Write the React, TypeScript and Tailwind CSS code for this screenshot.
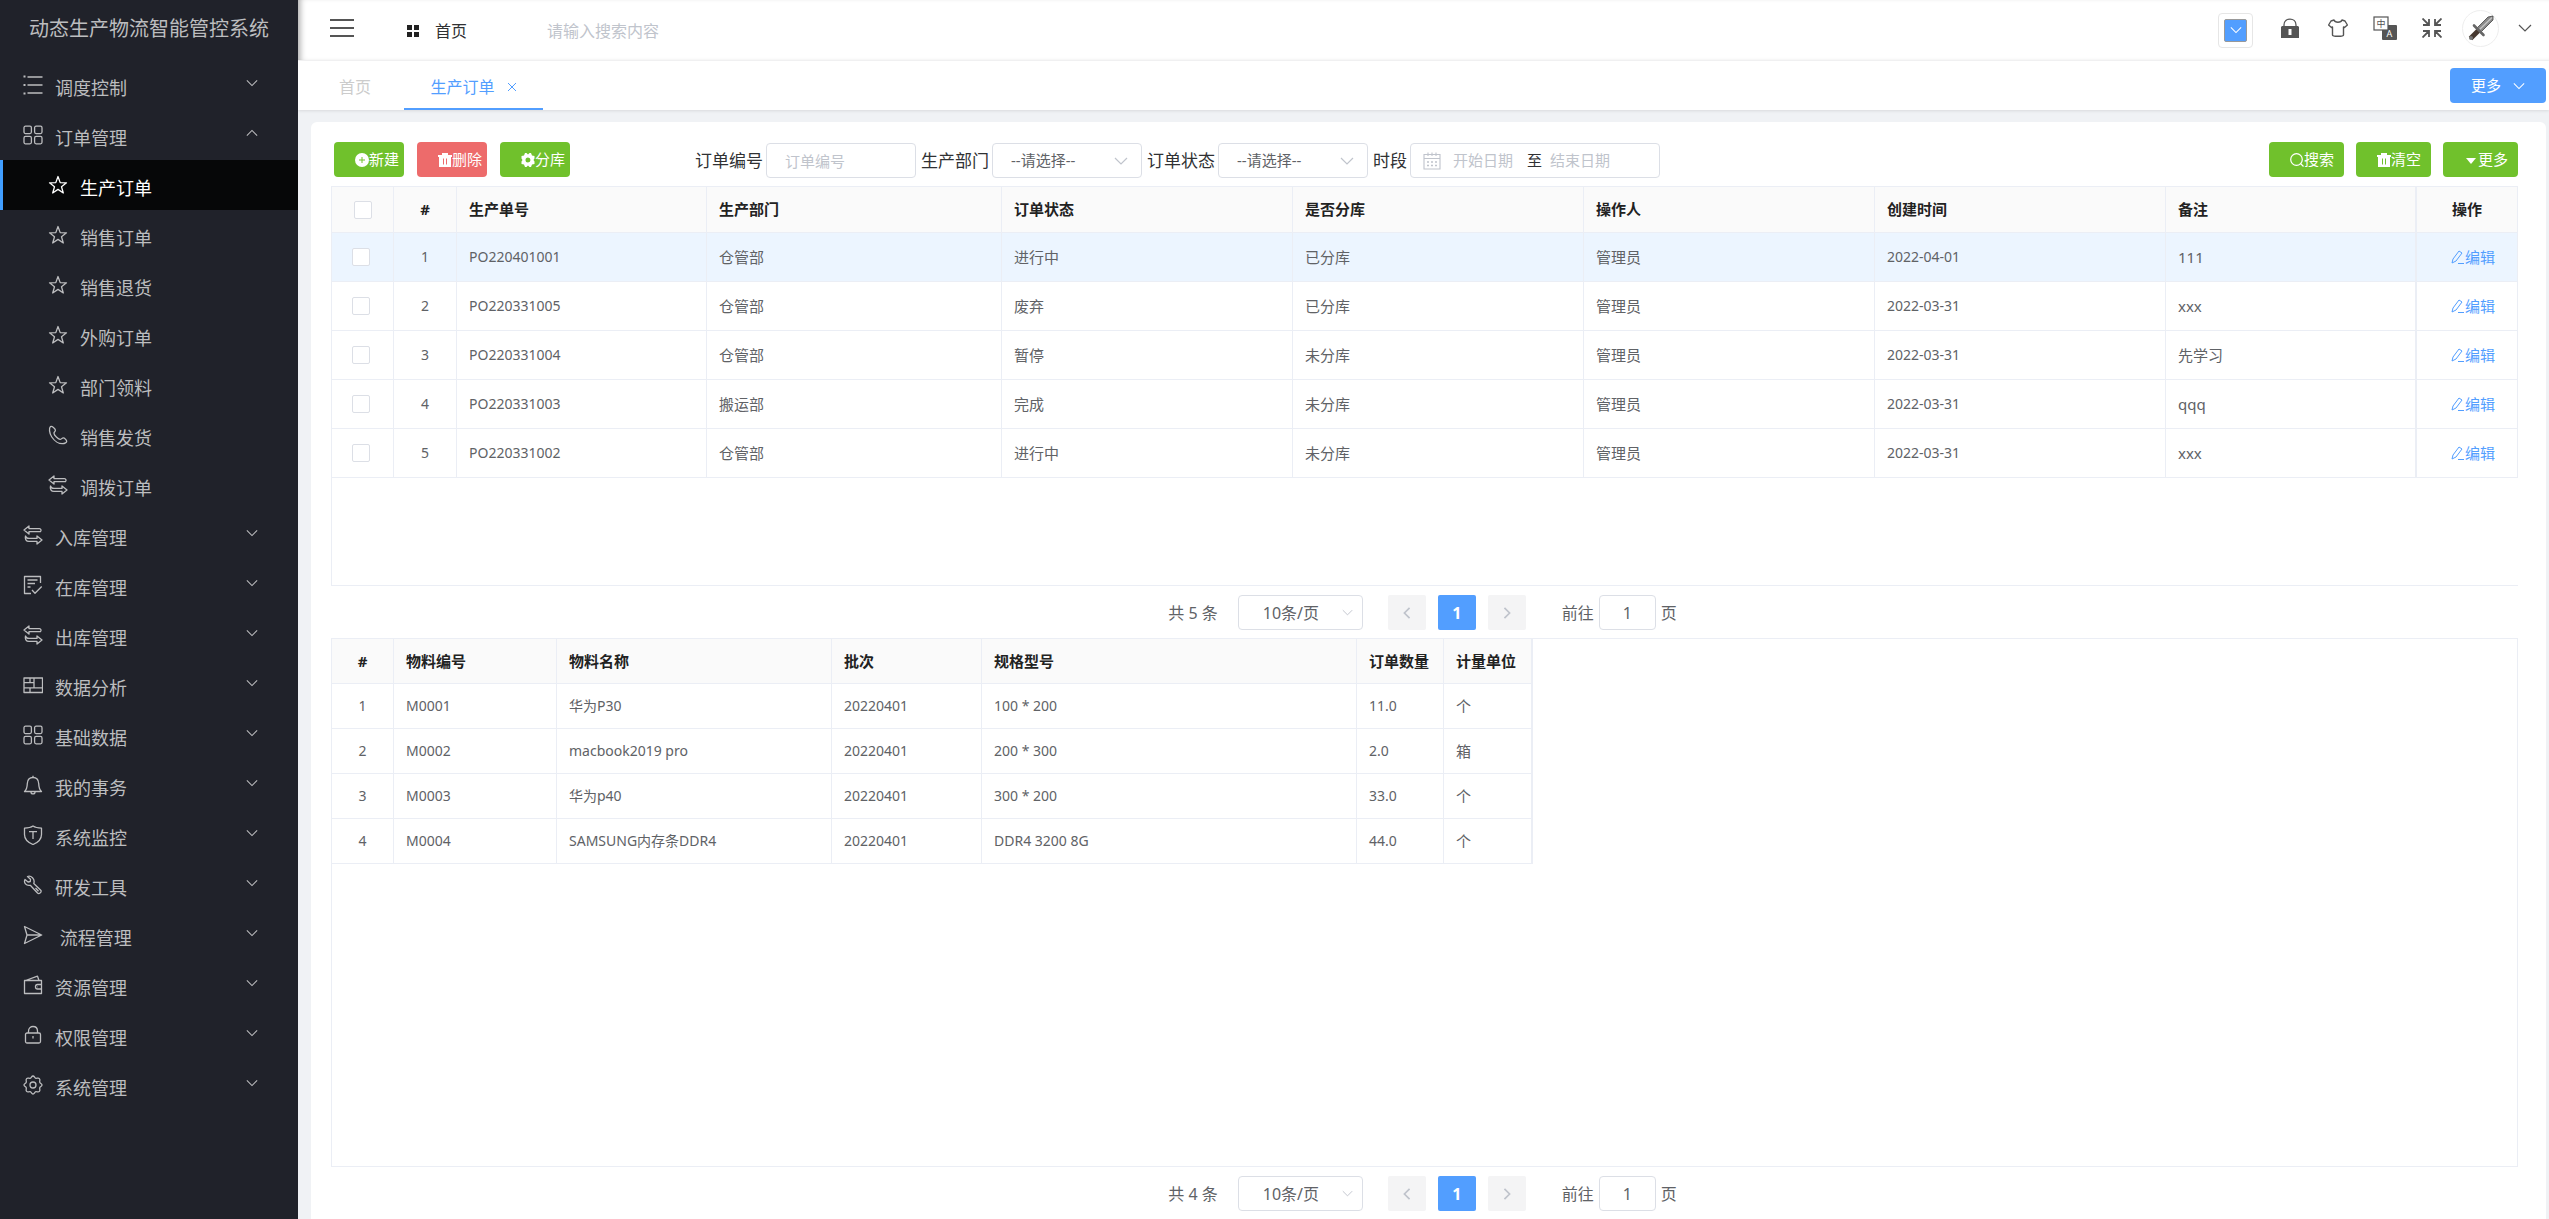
import type { ReactNode } from 'react'
import clsx from 'clsx'

type IconName =
  | 'list' | 'grid' | 'star' | 'phone' | 'transfer' | 'check' | 'table' | 'bell'
  | 'shield' | 'wrench' | 'send' | 'wallet' | 'lock' | 'gear'

const paths: Record<IconName, ReactNode> = {
  list: (
    <>
      <path d="M4.5 2H19.5M4.5 10H19.5M4.5 18H19.5" />
      <path d="M.5 1.5H2.5M.5 10H2.5M.5 18.5H2.5" strokeWidth="2" />
    </>
  ),
  grid: (
    <>
      <rect x="1" y="1.2" width="7.4" height="7.4" rx="1.5" />
      <rect x="11.6" y="1.2" width="7.4" height="7.4" rx="1.5" />
      <rect x="1" y="11.4" width="7.4" height="7.4" rx="1.5" />
      <rect x="11.6" y="11.4" width="7.4" height="7.4" rx="1.5" />
    </>
  ),
  star: <path d="M10 1.5 12.2 7.6 18.5 7.8 13.5 11.7 15.3 18 10 14.4 4.7 18 6.5 11.7 1.5 7.8 7.8 7.6Z" />,
  phone: (
    <path d="M2.5 1.5C.8 3 1.2 8 3.8 12S11 18.800 14.5 18.7C16.800 18.6 18.800 17.3 18.7 16.2S16.5 12.800 15.3 12.800C14 12.800 13.3 14.6 12 14.4C10 14 6.3 10.5 6 8.3C5.800 7 7.600 6.500 7.400 5.200C7.200 3.700 4 .6 2.500 1.500Z" />
  ),
  transfer: (
    <>
      <path d="M6 1 1 5 6 9V6.600H17.500C18.500 5.500 18 3.600 16.500 3.600H6Z" />
      <path d="M14 11V13.400H6C3.500 13.400 3 12.500 2.500 11 1.800 14 3 16.400 6 16.400H14V19L19 15Z" />
    </>
  ),
  check: (
    <>
      <path d="M17.5 8V1.5H1.5V18.5H8M4.5 5H14.5M4.5 8.500H12M4.500 12H7.500" />
      <path d="M9 15 12 18.2 18.700 11.500" />
    </>
  ),
  table: <path d="M1 3H19.5V17.5H1ZM1 7.7H11M1 12.8H19.5M11 3V12.8M7 7.7V3M7 12.8V17.5" />,
  bell: (
    <>
      <path d="M1.5 16.5H18.5C16 14.5 15.8 12 15.7 8.5C15.5 4.5 13 2.5 10 2.5S4.5 4.5 4.3 8.5C4.2 12 4 14.5 1.5 16.5Z" />
      <path d="M10 .8V2.5M8 17C8 19.6 12 19.6 12 17" />
    </>
  ),
  shield: (
    <>
      <path d="M10 1C7.5 2.7 5 3 1.5 3.2V9.5C1.5 14.5 5 17.5 10 19.5C15 17.5 18.5 14.5 18.5 9.5V3.2C15 3 12.5 2.7 10 1Z" />
      <path d="M6 6.7H14M10 6.7V14" />
    </>
  ),
  wrench: (
    <path d="M4.5 1.5 7.5 4.3 7.3 6.5 5 7 2 4.5C.5 7.5 3 11.2 7.3 10.3L14.5 18C16 19.5 18.7 17.5 18 15.5L10.8 8.5C12.3 4 8 .2 4.5 1.5ZM12.5 13 15.5 16.2" />
  ),
  send: <path d="M1.5 1.5 18.7 10 1.5 18.5 4 10ZM4 10H18.5" />,
  wallet: (
    <>
      <path d="M1.5 5.5H18.5V18.5H1.5ZM2.5 5.5 14.5 1.2 16 5.5" />
      <path d="M18.5 9.5H14.5C11.8 9.5 11.8 14 14.5 14H18.5M14.5 11.8H15" />
    </>
  ),
  lock: (
    <>
      <rect x="2.5" y="8" width="15" height="10" rx="1.5" />
      <path d="M5.5 8V6C5.5 0 14.5 0 14.5 6V8M10 11V13.5" />
    </>
  ),
  gear: (
    <>
      <path d="M10 1C11.500 1 11.500 3 12.900 3.300 14 3.500 15.300 2.500 16.400 3.600S16.500 6 16.700 7.100C17 8.500 19 8.500 19 10S17 11.500 16.700 12.900C16.500 14 17.500 15.300 16.400 16.400S14 16.500 12.900 16.700C11.500 17 11.500 19 10 19S8.500 17 7.100 16.700C6 16.500 4.700 17.500 3.600 16.400S3.500 14 3.300 12.900C3 11.500 1 11.500 1 10S3 8.500 3.300 7.100C3.500 6 2.500 4.700 3.600 3.600S6 3.500 7.100 3.300C8.500 3 8.500 1 10 1Z" />
      <circle cx="10" cy="10" r="3" />
    </>
  ),
}

function MenuIcon({ name }: { name: IconName }) {
  return (
    <svg viewBox="0 0 20 20" className="w-5 h-5 shrink-0" fill="none" stroke="currentColor" strokeWidth="1.3" strokeLinejoin="round">
      {paths[name]}
    </svg>
  )
}

function Chevron({ className }: { className?: string }) {
  return (
    <svg viewBox="0 0 14 14" className={clsx('shrink-0', className)} fill="none" stroke="currentColor" strokeWidth="1.2">
      <path d="M1 4 7 10 13 4" />
    </svg>
  )
}

interface MenuItem {
  label: string
  icon: IconName
  active?: boolean
  children?: MenuItem[]
}

const menu: MenuItem[] = [
  { label: '调度控制', icon: 'list' },
  {
    label: '订单管理',
    icon: 'grid',
    children: [
      { label: '生产订单', icon: 'star', active: true },
      { label: '销售订单', icon: 'star' },
      { label: '销售退货', icon: 'star' },
      { label: '外购订单', icon: 'star' },
      { label: '部门领料', icon: 'star' },
      { label: '销售发货', icon: 'phone' },
      { label: '调拨订单', icon: 'transfer' },
    ],
  },
  { label: '入库管理', icon: 'transfer' },
  { label: '在库管理', icon: 'check' },
  { label: '出库管理', icon: 'transfer' },
  { label: '数据分析', icon: 'table' },
  { label: '基础数据', icon: 'grid' },
  { label: '我的事务', icon: 'bell' },
  { label: '系统监控', icon: 'shield' },
  { label: '研发工具', icon: 'wrench' },
  { label: '\u00a0流程管理', icon: 'send' },
  { label: '资源管理', icon: 'wallet' },
  { label: '权限管理', icon: 'lock' },
  { label: '系统管理', icon: 'gear' },
]

function Sidebar() {
  return (
    <aside className="w-[298px] shrink-0 bg-[#20222a] text-[#bcbdbf]">
      <h1 className="h-[60px] flex items-center justify-center text-xl pb-0.5 bg-[#20222a] shadow-[0_0_6px_rgba(0,0,0,0.6)]">
        动态生产物流智能管控系统
      </h1>
      <nav className="bg-[#20222a] relative">
        {menu.map((item) => (
          <div key={item.label}>
            <button className="w-full h-[50px] flex items-center pl-[23px] pr-10 text-lg">
              <MenuIcon name={item.icon} />
              <span className="ml-3 pt-1.5 flex-1 text-left whitespace-pre">{item.label}</span>
              <Chevron className={clsx('w-3 h-3 mb-1', item.children && 'rotate-180')} />
            </button>
            {item.children?.map((child) => (
              <a
                key={child.label}
                href="#"
                className={clsx(
                  'h-[50px] flex items-center pl-[45px] text-lg border-l-3',
                  child.active ? 'bg-[#060708] text-white border-[#409eff]' : 'border-transparent',
                )}
              >
                <MenuIcon name={child.icon} />
                <span className="ml-3 pt-1.5">{child.label}</span>
              </a>
            ))}
          </div>
        ))}
      </nav>
    </aside>
  )
}

function TopBar() {
  return (
    <header className="h-[61px] flex items-center border-b border-[#f4f4f5] pl-8 pr-[17px] text-base text-[#303133] shadow-[inset_6px_0_6px_-4px_rgba(0,0,0,0.35)]">
      <button aria-label="折叠菜单">
        <svg viewBox="0 0 24 18" className="w-6 h-[18px] mb-1" stroke="#555" strokeWidth="2">
          <path d="M0 1H24M0 9H24M0 17H24" />
        </svg>
      </button>
      <a href="#" className="ml-[53px] flex items-center gap-4 pt-0.5">
        <svg viewBox="0 0 12 12" className="w-3 h-3" fill="#222">
          <path d="M0 0H5V5H0ZM7 0H12V5H7ZM0 7H5V12H0ZM7 7H12V12H7Z" />
        </svg>
        首页
      </a>
      <input
        aria-label="搜索"
        placeholder="请输入搜索内容"
        className="ml-20 w-80 pt-0.5 outline-none bg-transparent placeholder:text-[#c0c4cc]"
      />
      <div className="ml-auto flex items-center pb-1 text-[#555]">
        <button aria-label="主题色" className="w-[35px] h-[35px] mt-1 border border-[#e6e6e6] rounded p-[5px]">
          <span className="w-full h-full flex items-center justify-center bg-[#529eff] border border-[#999] rounded-xs text-white">
            <Chevron className="w-3 h-3" />
          </span>
        </button>
        <button aria-label="锁屏" className="ml-[27px]">
          <svg viewBox="0 0 20 20" className="w-5 h-5">
            <path d="M4 9V7C4-.8 16-.8 16 7V9" fill="none" stroke="currentColor" strokeWidth="1.3" />
            <path d="M2 8H18L19 9V20H1V9ZM8.5 11V17H11.5V11Z" fill="currentColor" fillRule="evenodd" />
          </svg>
        </button>
        <button aria-label="主题" className="ml-7">
          <svg viewBox="0 0 20 18" className="w-5 h-[18px]" fill="none" stroke="currentColor" strokeWidth="1.4" strokeLinejoin="round">
            <path d="M6 1C7 4 13 4 14 1L17 2 19.4 6 16.5 8.500 15.500 8V16C15.500 17 14 17.300 10 17.300S4.500 17 4.500 16V8L3.500 8.500.600 6 3 2Z" />
          </svg>
        </button>
        <button aria-label="语言" className="ml-[25px]">
          <svg viewBox="0 0 24 24" className="w-6 h-6" textAnchor="middle">
            <rect x="9" y="9" width="15" height="15" rx="1" fill="#555" />
            <rect x="1" y="1" width="14" height="13" fill="#fff" stroke="#555" strokeWidth="1.2" />
            <text x="8" y="11" fontSize="9" fill="#555">中</text>
            <text x="16.500" y="20.500" fontSize="9" fill="#fff">A</text>
          </svg>
        </button>
        <button aria-label="退出全屏" className="ml-[25px]">
          <svg viewBox="0 0 20 20" className="w-5 h-5" fill="none" stroke="currentColor" strokeWidth="1.8">
            <path d="M.5.5 6 6M1 7H7V1M19.5.5 14 6M19 7H13V1M.5 19.5 6 14M1 13H7V19M19.5 19.5 14 14M19 13H13V19" />
          </svg>
        </button>
        <span className="ml-5 w-[37px] h-[37px] rounded-full border border-[#eee] flex items-center justify-center">
          <svg viewBox="0 0 26 26" className="w-[26px] h-[26px]">
            <path d="M9 13 20 2 25 1 25 5 13 17Z" fill="#8a8a8a" stroke="#444" strokeWidth=".8" />
            <path d="M11 15 24 2.5" stroke="#c4c4c4" strokeWidth="1.4" />
            <path d="M6 10.5 15.5 20" stroke="#666" strokeWidth="2.6" strokeLinecap="round" />
            <path d="M10 16 2.500 23.500" stroke="#46382f" strokeWidth="5" />
            <circle cx="3" cy="23" r="2" fill="#777" />
          </svg>
        </span>
        <button aria-label="用户菜单" className="ml-[19px]">
          <Chevron className="w-[14px] h-[14px]" />
        </button>
      </div>
    </header>
  )
}

function TabBar() {
  return (
    <div className="h-[49px] flex items-center justify-between pr-[3px] text-base shadow-[0_1px_3px_rgba(0,0,0,0.1)]">
      <div className="h-full flex">
        <a href="#" className="flex items-center px-[33px] ml-2 pt-0.5 text-[#ccc]">首页</a>
        <div className="flex items-center h-full w-[139px] justify-center gap-3 pt-1 text-[#529eff] border-b-2 border-[#529eff]">
          <a href="#">生产订单</a>
          <button aria-label="关闭">
            <svg viewBox="0 0 10 10" className="w-[10px] h-[10px]" stroke="currentColor">
              <path d="M1 1 9 9M9 1 1 9" />
            </svg>
          </button>
        </div>
      </div>
      <button className="w-24 h-[35px] flex items-center justify-center gap-3 rounded bg-[#529eff] text-white text-[15px]">
        更多
        <Chevron className="w-3 h-3" />
      </button>
    </div>
  )
}

const plusIcon = (
  <svg viewBox="0 0 14 14" className="w-[14px] h-[14px]">
    <circle cx="7" cy="7" r="7" fill="currentColor" />
    <path d="M7 4V10M4 7H10" stroke="#70c12c" />
  </svg>
)

const trashIcon = (
  <svg viewBox="0 0 14 14" className="w-[14px] h-[14px]">
    <path d="M0 2H4V0H10V2H14V4H13V14H1V4H0ZM5 5.5V11.5H6V5.5ZM8 5.5V11.5H9V5.5Z" fill="currentColor" fillRule="evenodd" />
  </svg>
)

const gearIcon = (
  <svg viewBox="0 0 14 14" className="w-[14px] h-[14px]">
    <path d="M4 0H5.5L7 1.5 8.5 0H10L11 2.5 13.5 3V5.5L12.5 7 13.5 8.5V11L11 11.5 10 14H8.5L7 12.5 5.5 14H4L3 11.5.5 11V8.5L1.5 7 .5 5.5V3L3 2.5ZM7 4.5A2.5 2.5 0 1 0 7 9.5 2.5 2.5 0 0 0 7 4.5Z" fill="currentColor" fillRule="evenodd" />
  </svg>
)

const searchIcon = (
  <svg viewBox="0 0 14 14" className="w-[14px] h-[14px]" fill="none" stroke="currentColor" strokeWidth="1.2">
    <circle cx="6.5" cy="6.5" r="5.8" />
    <path d="M10.5 10.5 13.5 13.5" />
  </svg>
)

const caretIcon = (
  <svg viewBox="0 0 14 14" className="w-[14px] h-[14px]">
    <path d="M2 5H12L7 11Z" fill="currentColor" />
  </svg>
)

function ActionButton({ icon, label, danger, wide }: { icon: ReactNode; label: string; danger?: boolean; wide?: boolean }) {
  return (
    <button
      className={clsx(
        'h-[35px] flex items-center justify-end rounded text-[15px] text-white',
        wide ? 'w-[75px] pr-[10px]' : 'w-[70px] pr-[5px]',
        danger ? 'bg-[#ed6b6b]' : 'bg-[#70c12c]',
      )}
    >
      {icon}
      {label}
    </button>
  )
}

const control = 'h-[35px] bg-white border border-[#dcdfe6] rounded'

function FilterSelect({ id, label }: { id: string; label: string }) {
  return (
    <div className="flex items-center gap-[3px]">
      <label htmlFor={id}>{label}</label>
      <div className="relative">
        <select id={id} className={clsx(control, 'block w-[150px] pl-[18px] appearance-none text-[15px] text-[#606266]')}>
          <option>--请选择--</option>
        </select>
        <Chevron className="absolute right-[14px] top-[11px] w-[14px] h-[14px] text-[#c0c4cc]" />
      </div>
    </div>
  )
}

function Toolbar() {
  return (
    <div className="flex items-start justify-between pl-[3px] mb-2">
      <div className="flex gap-[13px]">
        <ActionButton icon={plusIcon} label="新建" />
        <ActionButton icon={trashIcon} label="删除" danger />
        <ActionButton icon={gearIcon} label="分库" />
      </div>
      <div className="flex-1 flex items-center gap-[5px] pl-[125px] pt-px text-[17px] text-[#303133]">
        <div className="flex items-center gap-[3px]">
          <label htmlFor="order-no">订单编号</label>
          <input
            id="order-no"
            placeholder="订单编号"
            className={clsx(control, 'w-[150px] px-[18px] text-[15px] placeholder:text-[#c0c4cc]')}
          />
        </div>
        <FilterSelect id="dept" label="生产部门" />
        <FilterSelect id="status" label="订单状态" />
        <div className="flex items-center gap-[3px]">
          <label htmlFor="date-start">时段</label>
          <div className={clsx(control, 'w-[250px] flex items-center pl-3 text-[15px]')}>
            <svg viewBox="0 0 18 18" className="w-[18px] h-[18px] mr-3" fill="none" stroke="#c0c4cc" strokeWidth="1.1">
              <path d="M1 2.5H17V17H1ZM1 6.5H17M5 .5V4M9 .5V4M13 .5V4" />
              <path d="M4 10H14M4 13.5H14" strokeDasharray="2 2" strokeWidth="1.5" />
            </svg>
            <input id="date-start" placeholder="开始日期" className="w-[74px] outline-none placeholder:text-[#c0c4cc]" />
            <span>至</span>
            <input aria-label="结束日期" placeholder="结束日期" className="ml-2 w-[74px] outline-none placeholder:text-[#c0c4cc]" />
          </div>
        </div>
      </div>
      <div className="flex gap-3">
        <ActionButton icon={searchIcon} label="搜索" wide />
        <ActionButton icon={trashIcon} label="清空" wide />
        <ActionButton icon={caretIcon} label="更多" wide />
      </div>
    </div>
  )
}

const orders = [
  ['PO220401001', '仓管部', '进行中', '已分库', '管理员', '2022-04-01', '111'],
  ['PO220331005', '仓管部', '废弃', '已分库', '管理员', '2022-03-31', 'xxx'],
  ['PO220331004', '仓管部', '暂停', '未分库', '管理员', '2022-03-31', '先学习'],
  ['PO220331003', '搬运部', '完成', '未分库', '管理员', '2022-03-31', 'qqq'],
  ['PO220331002', '仓管部', '进行中', '未分库', '管理员', '2022-03-31', 'xxx'],
]

const cell = 'border-r border-b border-[#ebeef5] px-3'
const th = cell + ' text-left font-bold whitespace-nowrap'
const thCenter = cell + ' text-center font-bold'
const checkbox = 'block mx-auto w-[18px] h-[18px] appearance-none bg-white border border-[#dcdfe6] rounded-xs'

function OrderTable() {
  return (
    <div className="h-[400px] border border-r-0 border-[#ebeef5]">
      <table className="w-full table-fixed border-separate border-spacing-0 text-[15px] text-[#606266]">
        <colgroup>
          <col className="w-[62px]" />
          <col className="w-[63px]" />
          <col className="w-[250px]" />
          <col className="w-[295px]" />
          <col />
          <col />
          <col />
          <col />
          <col className="w-[251px]" />
          <col className="w-[101px]" />
        </colgroup>
        <thead className="bg-[#fafafa] text-[#222]">
          <tr className="h-[46px]">
            <th className={thCenter}><input type="checkbox" aria-label="全选" className={checkbox} /></th>
            <th className={thCenter}>#</th>
            {['生产单号', '生产部门', '订单状态', '是否分库', '操作人', '创建时间'].map((name) => (
              <th key={name} className={th}>{name}</th>
            ))}
            <th className={clsx(th, 'border-r-2')}>备注</th>
            <th className={thCenter}>操作</th>
          </tr>
        </thead>
        <tbody>
          {orders.map((row, i) => (
            <tr key={row[0]} className={clsx('h-[49px]', i === 0 && 'bg-[#ecf5ff]')}>
              <td className={clsx(cell, 'pr-4')}><input type="checkbox" aria-label={row[0]} className={checkbox} /></td>
              <td className={clsx(cell, 'text-center text-sm')}>{i + 1}</td>
              {row.map((value, j) => (
                <td key={j} className={clsx(cell, (j === 0 || j === 5) && 'text-sm', j === 6 && 'border-r-2')}>
                  {value}
                </td>
              ))}
              <td className={cell}>
                <a href="#" className="flex items-center justify-center pl-3 text-[#529eff]">
                  <svg viewBox="0 0 14 14" className="w-[14px] h-[14px] shrink-0" fill="none" stroke="currentColor">
                    <path d="M1 13 2 9 8 1 11 3 5 11ZM7 13.5H13" />
                  </svg>
                  编辑
                </a>
              </td>
            </tr>
          ))}
        </tbody>
      </table>
    </div>
  )
}

const materials = [
  ['M0001', '华为P30', '20220401', '100 * 200', '11.0', '个'],
  ['M0002', 'macbook2019 pro', '20220401', '200 * 300', '2.0', '箱'],
  ['M0003', '华为p40', '20220401', '300 * 200', '33.0', '个'],
  ['M0004', 'SAMSUNG内存条DDR4', '20220401', 'DDR4 3200 8G', '44.0', '个'],
]

function MaterialTable() {
  return (
    <div className="flex-1 border border-[#ebeef5]">
      <table className="w-[1201px] table-fixed border-separate border-spacing-0 border-r border-[#ebeef5] text-[15px] text-[#606266]">
        <colgroup>
          <col className="w-[62px]" />
          <col className="w-[163px]" />
          <col className="w-[275px]" />
          <col className="w-[150px]" />
          <col className="w-[375px]" />
          <col className="w-[87px]" />
          <col />
        </colgroup>
        <thead className="bg-[#fafafa] text-[#222]">
          <tr className="h-[45px]">
            <th className={thCenter}>#</th>
            {['物料编号', '物料名称', '批次', '规格型号', '订单数量', '计量单位'].map((name) => (
              <th key={name} className={th}>{name}</th>
            ))}
          </tr>
        </thead>
        <tbody>
          {materials.map((row, i) => (
            <tr key={row[0]} className="h-[45px]">
              <td className={clsx(cell, 'text-center text-sm')}>{i + 1}</td>
              {row.map((value, j) => (
                <td key={j} className={clsx(cell, j < 5 && 'text-sm')}>{value}</td>
              ))}
            </tr>
          ))}
        </tbody>
      </table>
    </div>
  )
}

function Pagination({ id, total }: { id: string; total: number }) {
  const arrow = 'w-[38px] h-[35px] flex items-center justify-center rounded-xs bg-[#f4f4f5] text-[#c0c4cc]'
  return (
    <div className="pt-[9px] pb-2 pr-1 flex items-center justify-center text-base text-[#606266]">
      <span>共 {total} 条</span>
      <div className="relative ml-5">
        <select aria-label="每页条数" className={clsx(control, 'block w-[125px] pl-6 appearance-none')}>
          <option>10条/页</option>
        </select>
        <Chevron className="absolute right-[10px] top-3 w-[11px] h-[11px] text-[#c0c4cc]" />
      </div>
      <div className="flex gap-3 ml-[25px]">
        <button aria-label="上一页" className={arrow}><Chevron className="w-3 h-3 rotate-90 stroke-2" /></button>
        <button className="w-[38px] h-[35px] rounded-xs bg-[#529eff] text-white font-bold">1</button>
        <button aria-label="下一页" className={arrow}><Chevron className="w-3 h-3 -rotate-90 stroke-2" /></button>
      </div>
      <label htmlFor={id} className="ml-9 mr-[5px]">前往</label>
      <input id={id} defaultValue="1" className={clsx(control, 'w-[57px] text-center')} />
      <span className="ml-[5px]">页</span>
    </div>
  )
}

export default function App() {
  return (
    <div className="flex min-h-screen bg-[#f0f2f5] font-['Noto_Sans','Noto_Sans_CJK_SC',sans-serif]">
      <Sidebar />
      <div className="flex-1 min-w-0 flex flex-col">
        <div className="bg-white">
          <TopBar />
          <TabBar />
        </div>
        <main className="flex-1 flex flex-col mt-3 ml-[13px] mr-[3px] rounded-t-md bg-white pl-5 pr-7 pt-5">
          <Toolbar />
          <OrderTable />
          <Pagination id="orders-page" total={5} />
          <MaterialTable />
          <Pagination id="materials-page" total={4} />
        </main>
      </div>
    </div>
  )
}
